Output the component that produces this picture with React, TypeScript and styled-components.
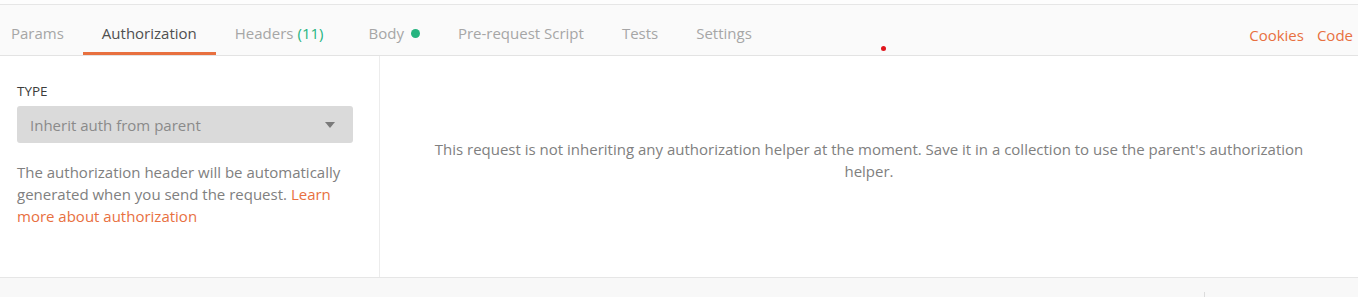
import React from 'react'
import styled, { createGlobalStyle } from 'styled-components'

const GlobalStyle = createGlobalStyle`
  html, body {
    margin: 0;
    padding: 0;
    background: #fafafa;
    font-family: 'Open Sans', 'Liberation Sans', sans-serif;
  }
`

const Page = styled.div`
  width: 1358px;
  height: 297px;
  overflow: hidden;
  background: #f8f8f8;
`

const TopStrip = styled.div`
  height: 4px;
  background: #fdfdfd;
  border-bottom: 1px solid #e6e6e6;
`

const TabBar = styled.div`
  position: relative;
  height: 51px;
  display: flex;
  align-items: stretch;
  background: #fafafa;
  border-bottom: 1px solid #e3e3e3;
  box-sizing: border-box;
`

const Tabs = styled.div`
  display: flex;
  flex: 1;
`

const Tab = styled.div<{ $active?: boolean; $first?: boolean }>`
  display: flex;
  align-items: center;
  padding: 9px 19px 0 ${(p) => (p.$first ? '11px' : '19px')};
  font-size: 15px;
  color: ${(p) => (p.$active ? '#505050' : '#a6a6a6')};
  border-bottom: 3px solid ${(p) => (p.$active ? '#e8703f' : 'transparent')};
  box-sizing: border-box;
  white-space: nowrap;
`

const Count = styled.span`
  color: #26b47f;
  margin-left: 4px;
  margin-right: 7px;
`

const Dot = styled.span`
  display: inline-block;
  width: 9px;
  height: 9px;
  border-radius: 50%;
  background: #26b47f;
  margin-left: 7px;
`

const Actions = styled.div`
  display: flex;
  align-items: center;
  gap: 13px;
  padding: 9px 5px 0 0;
`

const ActionLink = styled.a`
  font-size: 15px;
  color: #e8703f;
  text-decoration: none;
`

const Marker = styled.span`
  position: absolute;
  left: 881px;
  top: 41px;
  width: 5px;
  height: 5px;
  border-radius: 50%;
  background: #e0151c;
`

const Body = styled.div`
  display: flex;
  height: 222px;
  background: #fff;
  border-bottom: 1px solid #e6e6e6;
  box-sizing: border-box;
`

const Side = styled.div`
  width: 380px;
  flex-shrink: 0;
  padding: 26px 26px 0 17px;
  box-sizing: border-box;
  border-right: 1px solid #ececec;
`

const Label = styled.div`
  font-size: 13.5px;
  font-weight: 400;
  line-height: 18px;
  color: #3c3c3c;
  margin-bottom: 6px;
`

const Select = styled.div`
  height: 37px;
  width: 336px;
  border-radius: 3px;
  background: #dadada;
  display: flex;
  align-items: center;
  justify-content: space-between;
  padding: 0 18px 0 13px;
  box-sizing: border-box;
  font-size: 15px;
  color: #8a8a8a;
`

const Caret = styled.span`
  width: 0;
  height: 0;
  border-left: 5px solid transparent;
  border-right: 5px solid transparent;
  border-top: 6px solid #7a7a7a;
`

const Help = styled.p`
  margin: 18px 0 0;
  font-size: 15px;
  line-height: 22px;
  color: #808080;
`

const HelpLink = styled.a`
  color: #e8703f;
  text-decoration: none;
`

const Main = styled.div`
  flex: 1;
  padding: 82px 40px 0;
  box-sizing: border-box;
`

const Notice = styled.p`
  margin: 0;
  text-align: center;
  font-size: 15px;
  line-height: 22px;
  color: #808080;
`

const Footer = styled.div`
  position: relative;
  height: 20px;
  background: #f8f8f8;
`

const Divider = styled.span`
  position: absolute;
  left: 1204px;
  top: 14px;
  width: 1px;
  height: 6px;
  background: #dcdcdc;
`

export default function App() {
  return (
    <Page>
      <GlobalStyle />
      <TopStrip />
      <TabBar>
        <Tabs>
          <Tab $first>Params</Tab>
          <Tab $active>Authorization</Tab>
          <Tab>
            Headers<Count>(11)</Count>
          </Tab>
          <Tab>
            Body<Dot />
          </Tab>
          <Tab>Pre-request Script</Tab>
          <Tab>Tests</Tab>
          <Tab>Settings</Tab>
        </Tabs>
        <Actions>
          <ActionLink>Cookies</ActionLink>
          <ActionLink>Code</ActionLink>
        </Actions>
        <Marker />
      </TabBar>
      <Body>
        <Side>
          <Label>TYPE</Label>
          <Select>
            Inherit auth from parent
            <Caret />
          </Select>
          <Help>
            The authorization header will be automatically generated when you send the
            request. <HelpLink>Learn more about authorization</HelpLink>
          </Help>
        </Side>
        <Main>
          <Notice>
            This request is not inheriting any authorization helper at the moment. Save it
            in a collection to use the parent's authorization helper.
          </Notice>
        </Main>
      </Body>
      <Footer>
        <Divider />
      </Footer>
    </Page>
  )
}
